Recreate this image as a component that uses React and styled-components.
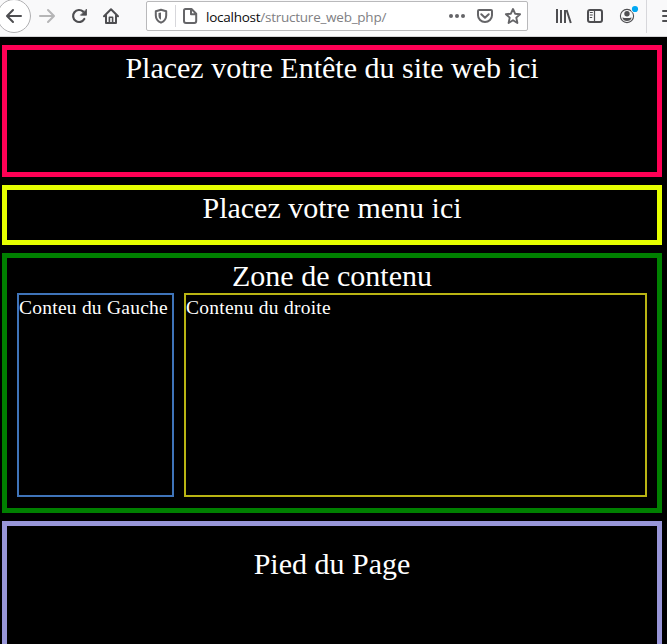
import React from 'react';
import styled, { createGlobalStyle } from 'styled-components';

const GlobalStyle = createGlobalStyle`
  * { box-sizing: border-box; }
  html, body { margin: 0; height: 100%; overflow: hidden; background: #000; }
`;

const Window = styled.div`
  width: 667px;
  height: 644px;
  overflow: hidden;
  background: #000;
`;

const Toolbar = styled.header`
  display: flex;
  height: 37px;
  background: #f9f9fa;
  border-bottom: 1px solid #d4d4d6;
  overflow: hidden;
`;

const Icon = styled.svg`
  flex: none;
  display: block;
  width: ${(p) => p.$w}px;
  height: 34px;
  margin-left: ${(p) => p.$gap || 0}px;
  fill: none;
  stroke: ${(p) => p.$color || '#4e4e51'};
  stroke-width: 2;
  stroke-linecap: round;
  stroke-linejoin: round;
`;

const AddressBar = styled.div`
  flex: none;
  display: flex;
  width: 382px;
  height: 30px;
  margin: 1px 0 0 26px;
  background: #fff;
  border: 1px solid #b9b9bb;
  border-radius: 2px;
`;

const AddressIcon = styled(Icon)`
  height: 28px;
  stroke: #656568;
`;

const Divider = styled.span`
  flex: none;
  width: 1px;
  height: ${(p) => p.$h}px;
  margin: ${(p) => p.$top}px 0 0 ${(p) => p.$gap}px;
  background: #d7d7db;
`;

const Address = styled.div`
  width: 236px;
  margin-left: 6px;
  font: 13.5px/30px 'Open Sans', 'Noto Sans', sans-serif;
  letter-spacing: -0.25px;
  color: #808083;
  white-space: nowrap;
`;

const Host = styled.span`
  color: #0c0c0d;
`;

const Page = styled.main`
  display: flex;
  flex-direction: column;
  gap: 8px;
  width: 660px;
  margin: 8px 0 0 2px;
  color: #fff;
  font-family: 'Liberation Serif', 'Times New Roman', serif;
`;

const Block = styled.section`
  flex: none;
  height: ${(p) => p.$h}px;
  padding: ${(p) => p.$padTop || 0}px 10px 0;
  border: 5px solid ${(p) => p.$color};
  text-align: center;
  font-size: 30px;
  line-height: 35px;
`;

const Columns = styled.div`
  display: grid;
  grid-template-columns: 157px 463px;
  gap: 10px;
`;

const Column = styled.div`
  height: 204px;
  border: 2px solid ${(p) => p.$color};
  text-align: left;
  font-size: 19.5px;
  letter-spacing: 0.24px;
  line-height: 26px;
  white-space: nowrap;
`;

function NavigationBar() {
  return (
    <Toolbar>
      <Icon $w={32} viewBox="0 0 32 34">
        <circle cx="14" cy="16" r="16.5" fill="#fff" stroke="#b1b1b3" strokeWidth="1" />
        <path d="M21 16H7.5M13 10L7 16l6 6" />
      </Icon>
      <Icon $w={18} $gap={6} $color="#b5b5b6" viewBox="38 0 18 34">
        <path d="M40 16h13.5M48 10l6 6-6 6" />
      </Icon>
      <Icon $w={20} $gap={14} viewBox="70 0 20 34">
        <path d="M83.2 11.6A6 6 0 1 0 84.3 19" strokeWidth="2.2" />
        <path d="M86.5 9.5v5.7h-5.7z" fill="#4e4e51" strokeWidth="0.8" />
      </Icon>
      <Icon $w={18} $gap={12} viewBox="102 0 18 34">
        <path d="M104 16.2L111 9.2l7 7M106 15.5V23h10v-7.5" />
        <path d="M109.4 22.5v-5.3h3.2v5.3" strokeWidth="1.6" />
      </Icon>

      <AddressBar>
        <AddressIcon $w={20} $gap={4} viewBox="151 2 20 28">
          <path d="M155.8 11.2l5.2-1.4 5.2 1.4v4.3c0 3.5-2 5.8-5.2 7.2-3.2-1.4-5.2-3.7-5.2-7.2z" />
          <path d="M161 12.4v7.3c-1.9-1-2.5-2.2-2.5-4.2v-2.4z" fill="#656568" stroke="none" />
        </AddressIcon>
        <Divider $h={22} $top={3} $gap={4} />
        <AddressIcon $w={18} $gap={6} viewBox="182 2 18 28">
          <path d="M185.5 9h6l4.7 4.7V21a2 2 0 0 1-2 2h-8.2a2 2 0 0 1-2-2V10.5a1.5 1.5 0 0 1 1.5-1.5zM191 9.5v4.7h5" />
        </AddressIcon>
        <Address>
          <Host>localhost</Host>/structure_web_php/
        </Address>
        <AddressIcon $w={20} $gap={5} viewBox="447 2 20 28">
          <g fill="#656568" stroke="none">
            <circle cx="451" cy="16" r="2" />
            <circle cx="457" cy="16" r="2" />
            <circle cx="463" cy="16" r="2" />
          </g>
        </AddressIcon>
        <AddressIcon $w={18} $gap={9} viewBox="476 2 18 28">
          <path d="M479 10h12a1 1 0 0 1 1 1v4.2a7 6.8 0 0 1-14 0V11a1 1 0 0 1 1-1z" />
          <path d="M481.3 14.3l3.7 3.4 3.7-3.4" />
        </AddressIcon>
        <AddressIcon $w={20} $gap={9} viewBox="503 2 20 28">
          <path
            d="M513 9l2.1 4.7 5 .5-3.8 3.4 1.1 5.4-4.4-2.8-4.4 2.8 1.1-5.4-3.8-3.4 5-.5z"
            strokeWidth="1.9"
          />
        </AddressIcon>
      </AddressBar>

      <Icon $w={20} $gap={26} viewBox="554 0 20 34">
        <path d="M557 9v14M561 10v13M565 10v13M566.6 10l4.2 13" strokeLinecap="butt" />
      </Icon>
      <Icon $w={18} $gap={12} viewBox="586 0 18 34">
        <rect x="588" y="10" width="14" height="12" rx="2" />
        <path d="M594.5 10v12" strokeWidth="1.2" />
        <path d="M590.2 12.5h2.2M590.2 15h2.2M590.2 17.5h1.6" strokeWidth="1" />
      </Icon>
      <Icon $w={24} $gap={14} viewBox="618 0 24 34">
        <circle cx="627" cy="16" r="6.6" strokeWidth="1.1" />
        <circle cx="627" cy="13.7" r="2.7" fill="#4e4e51" stroke="none" />
        <path d="M622.3 17.4q4.7 1 9.4 0-1 3.5-4.7 3.5t-4.7-3.5z" fill="#4e4e51" stroke="none" />
        <circle cx="635" cy="9" r="4" fill="#f9f9fa" stroke="none" />
        <circle cx="635" cy="9" r="3.1" fill="#00a8f3" stroke="none" />
      </Icon>
      <Divider $h={33} $top={0} $gap={4} />
      <Icon $w={7} $gap={13} viewBox="660 0 7 34">
        <path d="M663 11h12M663 16h12M663 21h12" />
      </Icon>
    </Toolbar>
  );
}

export default function App() {
  return (
    <Window>
      <GlobalStyle />
      <NavigationBar />
      <Page>
        <Block $h={132} $color="#ff0055">Placez votre Entête du site web ici</Block>
        <Block $h={60} $color="#e6ff00">Placez votre menu ici</Block>
        <Block $h={260} $color="#008000">
          Zone de contenu
          <Columns>
            <Column $color="#3f74b9">Conteu du Gauche</Column>
            <Column $color="#b9b413">Contenu du droite</Column>
          </Columns>
        </Block>
        <Block $h={160} $padTop={20} $color="#9896d8">Pied du Page</Block>
      </Page>
    </Window>
  );
}
